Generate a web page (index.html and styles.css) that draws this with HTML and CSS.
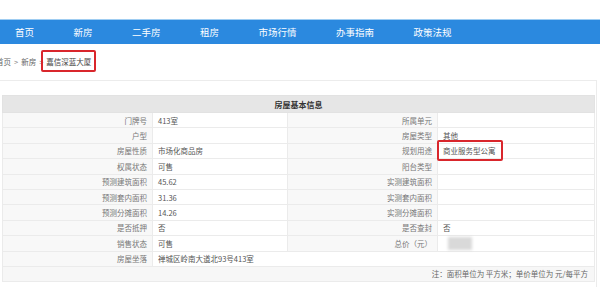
FILE: index.html
```html
<!DOCTYPE html>
<html lang="zh-CN">
<head>
  <meta charset="UTF-8">
  <meta name="viewport" content="width=device-width, initial-scale=1.0">
  <title>嘉信深蓝大厦 - 房屋基本信息</title>
  <link rel="stylesheet" href="styles.css">
</head>
<body>
  <div class="nav">
    <a href="#">首页</a>
    <a href="#">新房</a>
    <a href="#">二手房</a>
    <a href="#">租房</a>
    <a href="#">市场行情</a>
    <a href="#">办事指南</a>
    <a href="#">政策法规</a>
  </div>

  <div class="crumbs">
    <a href="#">首页</a><span class="sep">&gt;</span><a href="#">新房</a><span class="sep">&gt;</span><span class="mark crumbMark">嘉信深蓝大厦</span>
  </div>

  <div class="panel">
    <table class="infoTable">
      <colgroup>
        <col class="colLabel">
        <col class="colValue">
        <col class="colLabel">
        <col class="colValueWide">
      </colgroup>
      <tr class="headRow"><th colspan="4">房屋基本信息</th></tr>
      <tr><td class="label">门牌号</td><td>413室</td><td class="label">所属单元</td><td></td></tr>
      <tr><td class="label">户型</td><td></td><td class="label">房屋类型</td><td>其他</td></tr>
      <tr><td class="label">房屋性质</td><td>市场化商品房</td><td class="label">规划用途</td><td><span class="mark useMark">商业服务型公寓</span></td></tr>
      <tr><td class="label">权属状态</td><td>可售</td><td class="label">阳台类型</td><td></td></tr>
      <tr><td class="label">预测建筑面积</td><td>45.62</td><td class="label">实测建筑面积</td><td></td></tr>
      <tr><td class="label">预测套内面积</td><td>31.36</td><td class="label">实测套内面积</td><td></td></tr>
      <tr><td class="label">预测分摊面积</td><td>14.26</td><td class="label">实测分摊面积</td><td></td></tr>
      <tr><td class="label">是否抵押</td><td>否</td><td class="label">是否查封</td><td>否</td></tr>
      <tr><td class="label">销售状态</td><td>可售</td><td class="label">总价（元）</td><td><span class="blurred"></span></td></tr>
      <tr><td class="label">房屋坐落</td><td colspan="3">禅城区岭南大道北93号413室</td></tr>
      <tr class="noteRow"><td colspan="4">注：面积单位为 平方米；单价单位为 元/每平方</td></tr>
    </table>
  </div>
</body>
</html>
```

FILE: styles.css
```css
* {
  margin: 0;
  padding: 0;
  box-sizing: border-box;
}

body {
  font-family: "Noto Sans CJK SC", "Noto Sans", sans-serif;
  background-color: #fff;
  color: #555;
  overflow: hidden;
}

.nav {
  display: flex;
  gap: 39.5px;
  margin-top: 19px;
  height: 25px;
  padding-left: 15px;
  align-items: center;
  background-color: #2b89df;
  border-top: 1px solid #9fcdf2;
}

.nav a {
  color: #fff;
  font-size: 9.5px;
  text-decoration: none;
}

.crumbs {
  height: 36px;
  line-height: 36px;
  margin-left: -4px;
  font-size: 7.5px;
  color: #666;
}

.crumbs a {
  color: #666;
  text-decoration: none;
}

.crumbs .sep {
  margin: 0 3px;
  color: #888;
}

.mark {
  position: relative;
}

.mark::after {
  content: '';
  position: absolute;
  border: 2px solid #d9262c;
  border-radius: 2px;
}

.crumbMark {
  color: #444;
}

.crumbMark::after {
  left: -5px;
  right: -5px;
  top: -6px;
  bottom: -5px;
}

.useMark::after {
  left: -6px;
  right: -7px;
  top: -5px;
  bottom: -5px;
}

.panel {
  margin: 0 3px 0 -1px;
  padding: 14px 2px 5px 2px;
  border: 1px solid #ececec;
}

.infoTable {
  width: 592px;
  border-collapse: collapse;
  table-layout: fixed;
  font-size: 7.5px;
}

.colLabel {
  width: 150px;
}

.colValue {
  width: 135px;
}

.colValueWide {
  width: 157px;
}

.infoTable th {
  height: 17px;
  background-color: #e6e6e6;
  color: #333;
  font-size: 8px;
  font-weight: bold;
  text-align: center;
  border: 1px solid #e2e2e2;
}

.infoTable td {
  height: 15.4px;
  padding: 0 5px;
  border: 1px solid #ebebeb;
  background-color: #fff;
  color: #555;
  white-space: nowrap;
}

.infoTable td.label {
  background-color: #f8f8f8;
  color: #777;
  text-align: right;
}

.blurred {
  display: inline-block;
  width: 24px;
  height: 13px;
  margin-left: 5px;
  vertical-align: middle;
  background-color: #d9d9d9;
  filter: blur(1.5px);
}

.noteRow td {
  height: 15px;
  background-color: #f7f7f7;
  text-align: right;
  color: #666;
  padding-right: 6px;
}
```
